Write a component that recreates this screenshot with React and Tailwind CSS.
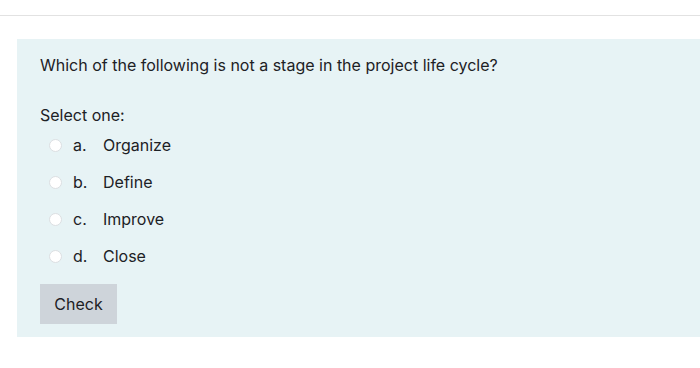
const OPTIONS = [
  { key: "a.", text: "Organize" },
  { key: "b.", text: "Define" },
  { key: "c.", text: "Improve" },
  { key: "d.", text: "Close" },
];

export default function App() {
  return (
    <div className="w-[700px] h-[368px] bg-white overflow-hidden font-['Inter','Liberation_Sans',Arial,sans-serif] text-[#1d2125]">
      <div className="h-[15px]" />
      <div className="h-px bg-[#e2e2e2]" />

      {/* Question card */}
      <div className="mt-[23px] ml-[17px] h-[298px] bg-[#e7f3f5] pl-[23px] pt-[14px]">
        <p className="text-[16px] leading-[24px]">
          Which of the following is not a stage in the project life cycle?
        </p>

        <p className="mt-[26px] h-[23px] text-[16px] leading-[24px]">Select one:</p>

        <div className="flex flex-col">
          {OPTIONS.map(({ key, text }) => (
            <label key={key} className="flex items-center h-[37px] text-[16px] leading-[24px]">
              <span className="ml-[9px] mt-px w-[13px] h-[13px] rounded-full bg-white border border-[#dcdfe2] flex-shrink-0" />
              <span className="ml-[11px] w-[30px]">{key}</span>
              <span>{text}</span>
            </label>
          ))}
        </div>

        <button className="mt-[10px] w-[77px] h-[40px] bg-[#ced4da] text-[16px] text-[#1d2125] flex items-center justify-center">
          Check
        </button>
      </div>
    </div>
  );
}
